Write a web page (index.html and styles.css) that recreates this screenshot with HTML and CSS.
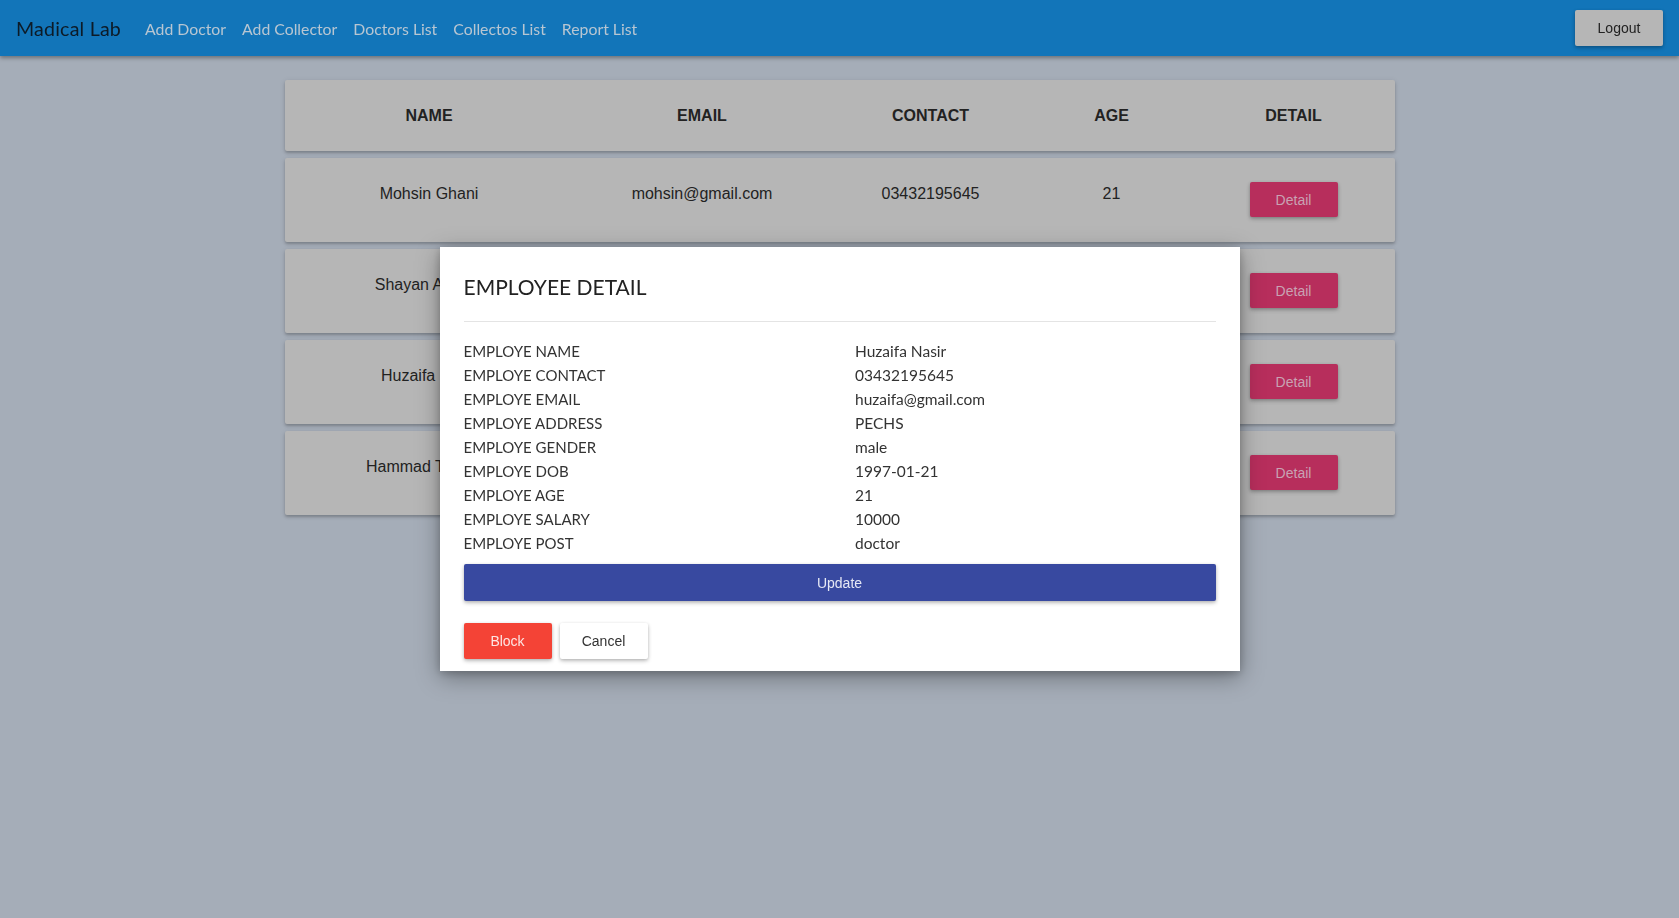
FILE: index.html
```html
<!DOCTYPE html>
<html lang="en">
<head>
<meta charset="utf-8">
<title>Madical Lab</title>
<link rel="stylesheet" href="styles.css">
</head>
<body>
<nav class="navbar">
  <a class="brand" href="#">Madical Lab</a>
  <ul class="nav-links">
    <li><a href="#">Add Doctor</a></li>
    <li><a href="#">Add Collector</a></li>
    <li><a href="#">Doctors List</a></li>
    <li><a href="#">Collectos List</a></li>
    <li><a href="#">Report List</a></li>
  </ul>
  <button class="btn btn-logout">Logout</button>
</nav>

<main class="container">
  <div class="table">
    <div class="trow thead">
      <div class="cell">NAME</div>
      <div class="cell">EMAIL</div>
      <div class="cell">CONTACT</div>
      <div class="cell">AGE</div>
      <div class="cell">DETAIL</div>
    </div>
    <div class="trow">
      <div class="cell">Mohsin Ghani</div>
      <div class="cell">mohsin@gmail.com</div>
      <div class="cell">03432195645</div>
      <div class="cell">21</div>
      <div class="cell"><button class="btn btn-detail">Detail</button></div>
    </div>
    <div class="trow">
      <div class="cell">Shayan Ahmed</div>
      <div class="cell">shayan@gmail.com</div>
      <div class="cell">03432195645</div>
      <div class="cell">21</div>
      <div class="cell"><button class="btn btn-detail">Detail</button></div>
    </div>
    <div class="trow">
      <div class="cell">Huzaifa Nasir</div>
      <div class="cell">huzaifa@gmail.com</div>
      <div class="cell">03432195645</div>
      <div class="cell">21</div>
      <div class="cell"><button class="btn btn-detail">Detail</button></div>
    </div>
    <div class="trow">
      <div class="cell">Hammad Tanveer</div>
      <div class="cell">hammad@gmail.com</div>
      <div class="cell">03432195645</div>
      <div class="cell">21</div>
      <div class="cell"><button class="btn btn-detail">Detail</button></div>
    </div>
  </div>
</main>

<div class="modal-wrap">
  <div class="modal">
    <h4 class="modal-title">EMPLOYEE DETAIL</h4>
    <hr class="divider">
    <dl class="details">
      <dt>EMPLOYE NAME</dt><dd>Huzaifa Nasir</dd>
      <dt>EMPLOYE CONTACT</dt><dd>03432195645</dd>
      <dt>EMPLOYE EMAIL</dt><dd>huzaifa@gmail.com</dd>
      <dt>EMPLOYE ADDRESS</dt><dd>PECHS</dd>
      <dt>EMPLOYE GENDER</dt><dd>male</dd>
      <dt>EMPLOYE DOB</dt><dd>1997-01-21</dd>
      <dt>EMPLOYE AGE</dt><dd>21</dd>
      <dt>EMPLOYE SALARY</dt><dd>10000</dd>
      <dt>EMPLOYE POST</dt><dd>doctor</dd>
    </dl>
    <button class="btn btn-update">Update</button>
    <div class="modal-actions">
      <button class="btn btn-block">Block</button>
      <button class="btn btn-cancel">Cancel</button>
    </div>
  </div>
</div>
</body>
</html>
```

FILE: styles.css
```css
* { box-sizing: border-box; }

html, body {
  margin: 0;
  padding: 0;
  height: 100%;
}

body {
  background: #a5adb8;
  font-family: "Liberation Sans", Arial, sans-serif;
  color: #222;
  overflow: hidden;
}

.navbar {
  height: 56px;
  display: flex;
  align-items: center;
  padding: 0 16px;
  background: #1275b9;
  box-shadow: 0 2px 4px rgba(0, 0, 0, 0.35);
  position: relative;
  z-index: 1;
}

.brand {
  font-family: Lato, "Open Sans", sans-serif;
  font-size: 19.6px;
  color: #0d1b27;
  text-decoration: none;
  margin-right: 16px;
  letter-spacing: 0.2px;
}

.nav-links {
  display: flex;
  list-style: none;
  margin: 0;
  padding: 0;
  flex: 1;
}

.nav-links a {
  display: block;
  padding: 8px;
  font-family: Lato, "Open Sans", sans-serif;
  font-size: 15.8px;
  color: #b8c6d2;
  text-decoration: none;
}

.btn {
  border: 0;
  border-radius: 2px;
  font-family: "Liberation Sans", Arial, sans-serif;
  font-size: 14px;
  cursor: pointer;
  box-shadow: 0 2px 4px rgba(0, 0, 0, 0.22), 0 1px 3px rgba(0, 0, 0, 0.12);
}

.btn-logout {
  width: 88px;
  height: 36px;
  background: #b6b6b6;
  color: #222;
}

.container {
  width: 1110px;
  margin: 24px auto 0;
}

.table {
  display: flex;
  flex-direction: column;
  gap: 7px;
}

.trow {
  display: grid;
  grid-template-columns: 289px 257px 200px 162px 202px;
  background: #b6b6b6;
  border-radius: 2px;
  box-shadow: 0 2px 3px rgba(0, 0, 0, 0.22), 0 1px 6px rgba(0, 0, 0, 0.08);
  height: 84px;
  font-size: 16px;
  color: #222;
}

.thead {
  height: 71px;
  font-weight: bold;
}

.cell {
  text-align: center;
  padding-top: 27px;
  line-height: 18px;
}

.trow:not(.thead) .cell:last-child {
  padding-top: 24px;
}

.btn-detail {
  width: 88px;
  height: 35px;
  background: #b72e5c;
  color: #c9a2b3;
}

.modal-wrap {
  position: fixed;
  inset: 0;
  display: flex;
  align-items: center;
  justify-content: center;
}

.modal {
  width: 800px;
  height: 424px;
  background: #fff;
  padding: 25px 24px 0;
  box-shadow: 0 6px 22px rgba(0, 0, 0, 0.35), 0 2px 8px rgba(0, 0, 0, 0.2);
  font-family: Lato, "Open Sans", sans-serif;
}

.modal-title {
  margin: 0;
  font-size: 21px;
  line-height: 30px;
  font-weight: normal;
  color: #222;
}

.divider {
  margin: 19px 0 17px;
  border: 0;
  border-top: 1px solid #e4e4e4;
}

.details {
  display: grid;
  grid-template-columns: 391.5px 1fr;
  margin: 0;
  line-height: 24px;
  color: #333;
}

.details dt {
  margin: 0;
  font-size: 15px;
}

.details dd {
  margin: 0;
  font-size: 15.5px;
}

.btn-update {
  display: block;
  width: 100%;
  height: 37px;
  margin-top: 9px;
  background: #3849a0;
  color: #e6e8f5;
  border-radius: 2px;
}

.modal-actions {
  display: flex;
  gap: 8px;
  margin-top: 22px;
}

.btn-block {
  width: 88px;
  height: 36px;
  background: #f44336;
  color: #fde6e4;
}

.btn-cancel {
  width: 88px;
  height: 36px;
  background: #fff;
  color: #333;
}
```
